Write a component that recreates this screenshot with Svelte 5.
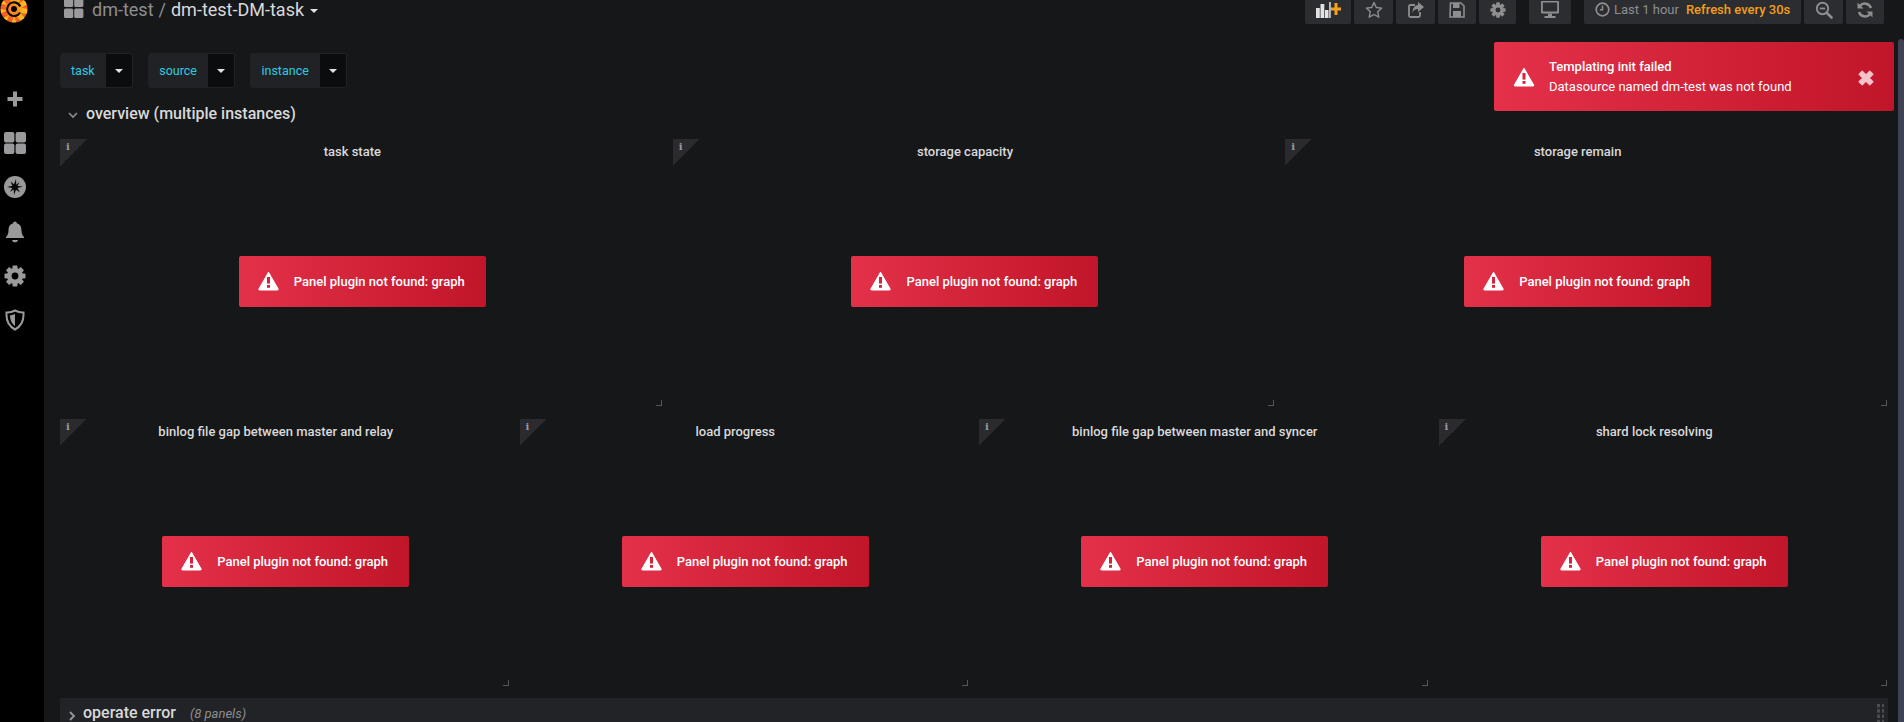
<script>
  const vars = ['task', 'source', 'instance'];
  const rowA = ['task state', 'storage capacity', 'storage remain'];
  const rowB = ['binlog file gap between master and relay', 'load progress', 'binlog file gap between master and syncer', 'shard lock resolving'];
  const gearTeeth = [0, 45, 90, 135];
  const logoTeeth = [0, 40, 80, 120, 160, 200, 240, 280, 320];
</script>

{#snippet warn(w, h)}
  <svg class="warn" width={w} height={h} viewBox="0 0 21 20">
    <path d="M10.5 1.5 L20 18 Q20.3 19 19.2 19 L1.8 19 Q.7 19 1 18 Z" fill="#fff" stroke="#fff" stroke-width="1.2" stroke-linejoin="round"/>
    <rect x="9" y="6" width="3" height="6.6" fill="#d4233a"/>
    <rect x="9" y="14" width="3" height="2.8" fill="#d4233a"/>
  </svg>
{/snippet}

{#snippet gear(size, color)}
  <svg width={size} height={size} viewBox="0 0 22 22">
    {#each gearTeeth as a}
      <rect x="8.5" y="0.5" width="5" height="21" rx="1" fill={color} transform="rotate({a} 11 11)"/>
    {/each}
    <circle cx="11" cy="11" r="8" fill={color}/>
    <circle cx="11" cy="11" r="3.4" fill="var(--hole)"/>
  </svg>
{/snippet}

{#snippet panel(title)}
  <section class="panel">
    <div class="corner"><span>i</span></div>
    <h3>{title}</h3>
    <div class="body">
      <div class="perr">
        {@render warn(21, 20)}
        <span>Panel plugin not found: graph</span>
      </div>
    </div>
    <svg class="resize" width="6" height="6" viewBox="0 0 6 6"><path d="M5 0h1v6H0V5h5z" fill="#55565a"/></svg>
  </section>
{/snippet}

<div class="shell">
  <aside class="side">
    <svg class="logo" width="30" height="24" viewBox="0 0 30 24">
      <defs>
        <linearGradient id="lg" x1="0" y1="0" x2="0" y2="1">
          <stop offset="0" stop-color="#ef5526"/>
          <stop offset="1" stop-color="#fdc01c"/>
        </linearGradient>
      </defs>
      <g fill="url(#lg)">
        <circle cx="14" cy="9" r="11.500"/>
        {#each logoTeeth as a}
          <rect x="11.500" y="-4.500" width="5" height="27" rx="1" transform="rotate({a} 14 9)"/>
        {/each}
      </g>
      <path d="M20 12.500 A6.800 6.800 0 1 1 20.300 6.500" fill="none" stroke="#0a0604" stroke-width="2.200"/>
      <circle cx="14" cy="9" r="3" fill="#0a0604"/>
      <path d="M14 4.500 A4.500 4.500 0 1 0 18.300 10.300" fill="none" stroke="#f78a1f" stroke-width="2.200"/>
    </svg>
    <ul class="menu">
      <li>
        <svg width="20" height="20" viewBox="0 0 20 20"><path d="M8 2.500h4v5.500h5.500v4H12v5.500H8V12H2.500V8H8z" fill="#9a9a9c"/></svg>
      </li>
      <li>
        <svg width="22" height="22" viewBox="0 0 22 22"><g fill="#9a9a9c"><rect x="0" y="0" width="10.400" height="10.400" rx="2"/><rect x="11.600" y="0" width="10.400" height="10.400" rx="2"/><rect x="0" y="11.600" width="10.400" height="10.400" rx="2"/><rect x="11.600" y="11.600" width="10.400" height="10.400" rx="2"/></g></svg>
      </li>
      <li>
        <svg width="22" height="22" viewBox="0 0 22 22"><circle cx="11" cy="11" r="11" fill="#9a9a9c"/><path d="M12 3 L12.300 8.800 L15.500 6 L13.500 10 L19 10.500 L13.500 12 L16 16.500 L12 13.800 L10 19 L9.700 13.600 L6 16 L8.300 12 L3 11 L8.400 9.800 L6.500 5.500 L10 8.300 Z" fill="#0a0a0a"/></svg>
      </li>
      <li>
        <svg width="20" height="22" viewBox="0 0 20 22"><path d="M10 0.500c1 0 1.800.8 1.800 1.700 3.300.8 4.700 3.700 4.700 7.300 0 3 .8 4.700 2.500 6.500v1H1v-1c1.700-1.800 2.500-3.500 2.500-6.500 0-3.600 1.400-6.500 4.700-7.300C8.200 1.300 9 .5 10 .5z" fill="#9a9a9c"/><path d="M7 19h6c-.3 1.400-1.500 2.300-3 2.300S7.300 20.400 7 19z" fill="#9a9a9c"/></svg>
      </li>
      <li class="dark">
        {@render gear(22, '#9a9a9c')}
      </li>
      <li>
        <svg width="20" height="22" viewBox="0 0 20 22"><path d="M10 1.500c3 1.500 5.700 2.200 8.500 2 .5 7.500-2 13.500-8.500 17C3.500 17 1 11 1.500 3.500c2.800.2 5.500-.5 8.500-2z" fill="none" stroke="#9a9a9c" stroke-width="2"/><path d="M10 5c-1.800.8-3.500 1.200-5 1.200 0 4.500 1.600 8.500 5 10.800z" fill="#9a9a9c"/></svg>
      </li>
    </ul>
  </aside>

  <main class="main">
    <header class="nav">
      <div class="crumb">
        <svg width="20" height="18" viewBox="0 0 20 18"><g fill="#9a9a9c"><rect x="0" y="-3" width="9.200" height="10" rx="1.500"/><rect x="10.200" y="-3" width="9.200" height="10" rx="1.500"/><rect x="0" y="8.500" width="9.200" height="9.500" rx="1.500"/><rect x="10.200" y="8.500" width="9.200" height="9.500" rx="1.500"/></g></svg>
        <span class="parent">dm-test</span>
        <span class="sep">/</span>
        <span class="cur">dm-test-DM-task</span>
        <i class="caret small"></i>
      </div>
      <div class="tools">
        <div class="btn w46">
          <svg width="26" height="18" viewBox="0 0 26 18"><g fill="#e3e3e3"><rect x="1" y="7" width="3.800" height="10"/><rect x="5.500" y="3" width="3.800" height="14"/><rect x="10" y="9" width="3.500" height="8"/></g><rect x="14.200" y="1" width="1.500" height="16" fill="#e3e3e3"/><path d="M19.500 2h3v4.500h3.500v3h-3.500V14h-3V9.500H16v-3h3.500z" fill="#f5a01e"/></svg>
        </div>
        <div class="btn w39">
          <svg width="18" height="18" viewBox="0 0 18 18"><path d="M9 1.500l2.300 5 5.400.6-4 3.700 1.100 5.400L9 13.500l-4.800 2.700 1.100-5.400-4-3.700 5.400-.6z" fill="none" stroke="#8e8e90" stroke-width="1.400" stroke-linejoin="round"/></svg>
        </div>
        <div class="btn w39">
          <svg width="18" height="18" viewBox="0 0 18 18"><path d="M8 4H3.500A1.500 1.500 0 0 0 2 5.500v9A1.500 1.500 0 0 0 3.500 16h8a1.500 1.500 0 0 0 1.500-1.500V11" fill="none" stroke="#8e8e90" stroke-width="1.800"/><path d="M11 1l6 5-6 5V8C8 8 6.500 9 5.500 12 5.500 7.500 7.500 4.500 11 4z" fill="#8e8e90"/></svg>
        </div>
        <div class="btn w38">
          <svg width="16" height="18" viewBox="0 0 16 18"><path d="M1.500 2h10.500L15 5v11H1z" fill="none" stroke="#8e8e90" stroke-width="1.600"/><rect x="4" y="2" width="6.500" height="5" fill="#8e8e90"/><rect x="4" y="10" width="8" height="6" fill="#8e8e90"/></svg>
        </div>
        <div class="btn w37">
          {@render gear(16, '#8e8e90')}
        </div>
        <div class="btn w42 ml">
          <svg width="20" height="18" viewBox="0 0 20 18"><rect x="1" y="0" width="18" height="12.500" rx="1" fill="#8e8e90"/><rect x="2.800" y="1.500" width="14.400" height="9" fill="#2c2d30"/><rect x="8" y="12.500" width="4" height="3" fill="#8e8e90"/><rect x="4.500" y="15" width="11" height="2" fill="#8e8e90"/></svg>
        </div>
        <div class="btn time ml">
          <svg width="15" height="15" viewBox="0 0 15 15"><circle cx="7.500" cy="7.500" r="6.300" fill="none" stroke="#8e8e90" stroke-width="1.700"/><path d="M7.500 3.500v4.300H4.800" fill="none" stroke="#8e8e90" stroke-width="1.500"/></svg>
          <span class="last">Last 1 hour</span>
          <span class="refresh">Refresh every 30s</span>
        </div>
        <div class="btn w39">
          <svg width="18" height="18" viewBox="0 0 18 18"><circle cx="7.500" cy="7.500" r="5.700" fill="none" stroke="#8e8e90" stroke-width="1.900"/><path d="M11.800 11.800l4.700 4.700" stroke="#8e8e90" stroke-width="2.600" stroke-linecap="round"/><rect x="4.800" y="6.600" width="5.400" height="1.800" fill="#8e8e90"/></svg>
        </div>
        <div class="btn w38">
          <svg width="18" height="18" viewBox="0 0 18 18"><path d="M15 7A6.500 6.500 0 0 0 3.800 5" fill="none" stroke="#8e8e90" stroke-width="2.400"/><path d="M1.500 1.500v6h6z" fill="#8e8e90"/><path d="M3 11a6.500 6.500 0 0 0 11.200 2" fill="none" stroke="#8e8e90" stroke-width="2.400"/><path d="M16.500 16.500v-6h-6z" fill="#8e8e90"/></svg>
        </div>
      </div>
    </header>

    <div class="vars">
      {#each vars as v}
        <div class="var">
          <span class="lab">{v}</span>
          <span class="pick"><i class="caret"></i></span>
        </div>
      {/each}
    </div>

    <div class="rowhead">
      <svg width="12" height="12" viewBox="0 0 12 12"><path d="M2 4l4 4 4-4" fill="none" stroke="#8e8e90" stroke-width="1.600"/></svg>
      <span>overview (multiple instances)</span>
    </div>

    <div class="grid three">
      {#each rowA as t}
        {@render panel(t)}
      {/each}
    </div>
    <div class="grid four">
      {#each rowB as t}
        {@render panel(t)}
      {/each}
    </div>

    <div class="collapsed">
      <svg width="12" height="12" viewBox="0 0 12 12"><path d="M4 2l4 4-4 4" fill="none" stroke="#9a9a9c" stroke-width="1.800"/></svg>
      <span class="ct">operate error</span>
      <span class="cn">(8 panels)</span>
      <span class="drag"></span>
    </div>
  </main>

  <div class="alert">
    {@render warn(22, 20)}
    <div class="atext">
      <strong>Templating init failed</strong>
      <span>Datasource named dm-test was not found</span>
    </div>
    <svg class="close" width="20" height="20" viewBox="0 0 16 16"><path d="M2.500 5L5 2.500 8 5.500l3-3L13.500 5l-3 3 3 3L11 13.500l-3-3-3 3L2.500 11l3-3z" fill="#f4c4cb" stroke="#f4c4cb" stroke-linejoin="round"/></svg>
  </div>
  <div class="scroll"></div>
</div>

<style>
  :global(body) {
    margin: 0;
    background: #161719;
    overflow: hidden;
  }
  .shell {
    display: flex;
    width: 1904px;
    height: 722px;
    overflow: hidden;
    background: #161719;
    color: #d8d9da;
    font-family: Roboto, "Liberation Sans", sans-serif;
    font-size: 13px;
    position: relative;
  }
  .side {
    flex: 0 0 44px;
    background: #000;
    --hole: #000;
    position: relative;
  }
  .logo {
    display: block;
  }
  .menu {
    list-style: none;
    margin: 53px 0 0;
    padding: 0;
  }
  .menu li {
    height: 44.2px;
    width: 30px;
    display: flex;
    align-items: center;
    justify-content: center;
  }
  .main {
    flex: 1;
    padding-left: 16px;
    padding-right: 14px;
    min-width: 0;
  }
  .nav {
    height: 24px;
    display: flex;
    justify-content: space-between;
  }
  .crumb {
    display: flex;
    align-items: center;
    height: 18px;
    padding-left: 4px;
    overflow: hidden;
    font-size: 18px;
  }
  .crumb svg { margin-right: 8px; }
  .parent { color: #8e8e90; }
  .sep { color: #8e8e90; margin: 0 5px; }
  .cur { color: #d8d9da; }
  .caret {
    display: inline-block;
    width: 0;
    height: 0;
    border-left: 4px solid transparent;
    border-right: 4px solid transparent;
    border-top: 4px solid #e3e3e3;
  }
  .caret.small {
    margin-left: 6px;
    margin-top: 4px;
  }
  .tools {
    display: flex;
    gap: 3px;
    margin-right: 6px;
  }
  .btn {
    --hole: #2c2d30;
    height: 24px;
    padding-bottom: 5px;
    background: #2c2d30;
    border-radius: 0 0 2px 2px;
    display: flex;
    align-items: center;
    justify-content: center;
    box-sizing: border-box;
    overflow: hidden;
  }
  .w46 { width: 46px; }
  .w42 { width: 42px; }
  .w39 { width: 39px; }
  .w38 { width: 38px; }
  .w37 { width: 37px; }
  .ml { margin-left: 10px; }
  .time {
    width: 217px;
    justify-content: flex-start;
    padding-left: 11px;
  }
  .last { color: #8e8e90; margin-left: 4px; }
  .refresh { color: #f29d1e; font-weight: 500; margin-left: 7px; }
  .vars {
    display: flex;
    gap: 15.5px;
    margin-top: 29px;
  }
  .var {
    height: 35px;
    display: flex;
    box-sizing: border-box;
    border: 1px solid #202226;
    border-radius: 3px;
    overflow: hidden;
    background: #212225;
  }
  .lab {
    display: flex;
    align-items: center;
    padding: 0 11px 0 10px;
    color: #2dcbe0;
    font-weight: 400;
    font-size: 12.5px;
  }
  .pick {
    width: 26px;
    background: #0b0c0e;
    display: flex;
    align-items: center;
    justify-content: center;
  }
  .rowhead {
    height: 51px;
    box-sizing: border-box;
    padding: 14px 0 0 7px;
    display: flex;
    align-items: flex-start;
    gap: 7px;
    font-size: 16px;
    font-weight: 500;
    color: #d8d9da;
    line-height: 24px;
  }
  .rowhead svg { margin-top: 7px; }
  .grid {
    display: grid;
    gap: 8px;
    width: 1830px;
    margin-bottom: 13px;
  }
  .three { grid-template-columns: repeat(3, 1fr); }
  .four { grid-template-columns: repeat(4, 1fr); margin-bottom: 12px; }
  .panel {
    position: relative;
    height: 267px;
    display: flex;
    flex-direction: column;
  }
  .corner {
    position: absolute;
    left: 0;
    top: 0;
    width: 27px;
    height: 27px;
    background: linear-gradient(135deg, #2b2b2f 50%, transparent 50%);
  }
  .corner span {
    position: absolute;
    left: 6px;
    top: 2px;
    font-family: "DejaVu Serif", serif;
    font-weight: 700;
    font-size: 10px;
    color: #9a9a9c;
    line-height: 12px;
  }
  h3 {
    margin: 0;
    height: 26px;
    line-height: 26px;
    text-align: center;
    padding-right: 20px;
    font-size: 13px;
    font-weight: 500;
    color: #d8d9da;
  }
  .body {
    flex: 1;
    display: flex;
    align-items: center;
    justify-content: center;
    padding-bottom: 9px;
  }
  .perr {
    width: 247px;
    height: 51px;
    box-sizing: border-box;
    padding-left: 19px;
    display: flex;
    align-items: center;
    gap: 15px;
    background: linear-gradient(90deg, #e33149, #c11529);
    border-radius: 2px;
    color: #fff;
    font-weight: 500;
    font-size: 13px;
    box-shadow: 0 0 1px #0006;
  }
  .resize {
    position: absolute;
    right: 3px;
    bottom: 0;
  }
  .collapsed {
    width: 1828px;
    height: 30px;
    background: #222326;
    display: flex;
    align-items: flex-start;
    box-sizing: border-box;
    padding: 3px 0 0 6px;
    position: relative;
  }
  .collapsed svg { margin-top: 9px; }
  .ct {
    font-size: 16px;
    font-weight: 500;
    line-height: 24px;
    margin-left: 5px;
    color: #d8d9da;
  }
  .cn {
    font-style: italic;
    font-size: 13px;
    color: #8e8e90;
    margin-left: 14px;
    line-height: 26px;
  }
  .drag {
    position: absolute;
    right: 4px;
    top: 5px;
    width: 8px;
    height: 24px;
    background-image: radial-gradient(#4a4b4f 0 1.7px, transparent 1.8px);
    background-size: 5px 5.300px;
  }
  .alert {
    position: absolute;
    left: 1494px;
    top: 42px;
    width: 400px;
    height: 69px;
    box-sizing: border-box;
    padding-left: 19px;
    display: flex;
    align-items: center;
    background: linear-gradient(90deg, #e33149, #c11529);
    border-radius: 2px;
    color: #fff;
  }
  .atext {
    display: flex;
    flex-direction: column;
    gap: 4px;
    margin-left: 14px;
    line-height: 16px;
    font-size: 13px;
  }
  .atext strong { font-weight: 500; }
  .close {
    position: absolute;
    right: 18px;
    top: 26px;
  }
  .scroll {
    position: absolute;
    right: 0;
    top: 39px;
    bottom: 0;
    width: 6px;
    background: #3e4252;
    border-radius: 3px 3px 0 0;
  }
</style>
